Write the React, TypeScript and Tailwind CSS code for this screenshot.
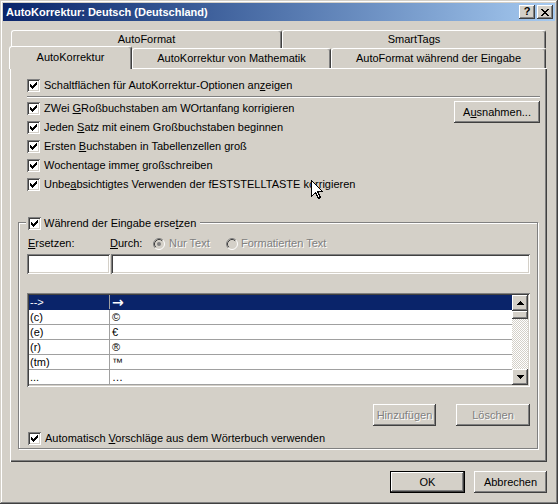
import React from "react";

const RAISED =
  "shadow-[inset_-1px_-1px_#404040,inset_1px_1px_#ffffff,inset_-2px_-2px_#808080,inset_2px_2px_#d4d0c8]";
const SUNKEN =
  "shadow-[inset_1px_1px_#808080,inset_-1px_-1px_#ffffff,inset_2px_2px_#404040,inset_-2px_-2px_#d4d0c8]";
const DISABLED = "text-[#808080] [text-shadow:1px_1px_0_#ffffff]";

function Check() {
  const tops = [2, 3, 4, 3, 2, 1, 0];
  return (
    <span className={`block h-[13px] w-[13px] shrink-0 bg-white ${SUNKEN}`}>
      <svg width="13" height="13" className="block" shapeRendering="crispEdges">
        {tops.map((t, i) => (
          <rect key={i} x={3 + i} y={3 + t} width={1} height={3} fill="#000" />
        ))}
      </svg>
    </span>
  );
}

function CheckRow({ children }: { children: React.ReactNode }) {
  return (
    <div className="flex h-[13px] items-center gap-[4px]">
      <Check />
      <span className="whitespace-nowrap">{children}</span>
    </div>
  );
}

function U({ children }: { children: React.ReactNode }) {
  return <span className="underline underline-offset-[1px]">{children}</span>;
}

function Radio({ checked }: { checked?: boolean }) {
  return (
    <svg width="12" height="12" className="block shrink-0">
      <path d="M2.11 9.89 A5.5 5.5 0 0 1 9.89 2.11" stroke="#808080" fill="none" />
      <path d="M9.89 2.11 A5.5 5.5 0 0 1 2.11 9.89" stroke="#ffffff" fill="none" />
      <path d="M2.82 9.18 A4.5 4.5 0 0 1 9.18 2.82" stroke="#404040" fill="none" />
      {checked && <circle cx="6" cy="6" r="2" fill="#808080" />}
    </svg>
  );
}

function Tab({
  w,
  h,
  children,
  extra = "",
}: {
  w: string;
  h: string;
  children: React.ReactNode;
  extra?: string;
}) {
  return (
    <div
      className={`flex items-center justify-center rounded-t-[3px] border-t border-l border-r border-white border-r-[#404040] bg-[#d4d0c8] shadow-[inset_-1px_0_#808080] ${w} ${h} ${extra}`}
    >
      {children}
    </div>
  );
}

function Arrow({ up }: { up?: boolean }) {
  return (
    <svg width="7" height="4" className="block" shapeRendering="crispEdges">
      {up ? (
        <>
          <rect x="3" y="0" width="1" height="1" />
          <rect x="2" y="1" width="3" height="1" />
          <rect x="1" y="2" width="5" height="1" />
          <rect x="0" y="3" width="7" height="1" />
        </>
      ) : (
        <>
          <rect x="0" y="0" width="7" height="1" />
          <rect x="1" y="1" width="5" height="1" />
          <rect x="2" y="2" width="3" height="1" />
          <rect x="3" y="3" width="1" height="1" />
        </>
      )}
    </svg>
  );
}

const rows: [string, string][] = [
  ["-->", "→"],
  ["(c)", "©"],
  ["(e)", "€"],
  ["(r)", "®"],
  ["(tm)", "™"],
  ["...", "…"],
];

export default function App() {
  return (
    <div
      className={`relative h-[504px] w-[558px] overflow-hidden bg-[#d4d0c8] p-[3px] text-[11px] leading-[13px] text-black [font-family:'Liberation_Sans',Arial,sans-serif] shadow-[inset_-1px_-1px_#404040,inset_1px_1px_#d4d0c8,inset_-2px_-2px_#808080,inset_2px_2px_#ffffff]`}
    >
      {/* Title bar */}
      <div className="flex h-[18px] items-center bg-linear-to-r from-[#0a246a] to-[#a6caf0] pl-[3px] pr-[2px]">
        <span className="flex-1 font-bold text-white">AutoKorrektur: Deutsch (Deutschland)</span>
        <div
          className={`flex h-[14px] w-[16px] items-center justify-center bg-[#d4d0c8] pb-[1px] font-bold ${RAISED}`}
        >
          ?
        </div>
        <div className={`ml-[2px] flex h-[14px] w-[16px] items-center justify-center bg-[#d4d0c8] ${RAISED}`}>
          <svg width="8" height="7" className="block" shapeRendering="crispEdges">
            <path d="M0 0h2v1h1v1h2V1h1V0h2v1H7v1H6v1H5v1h1v1h1v1h1v1H6V6H5V5H3v1H2v1H0V6h1V5h1V4h1V3H2V2H1V1H0z" />
          </svg>
        </div>
      </div>

      {/* Content */}
      <div className="pl-[7px] pt-[9px]">
        {/* back tab row */}
        <div className="flex h-[18px] pl-[1px]">
          <Tab w="w-[271px]" h="h-[18px]">AutoFormat</Tab>
          <Tab w="w-[264px]" h="h-[18px]">SmartTags</Tab>
        </div>
        {/* front tab row */}
        <div className="flex h-[20px] items-end">
          <Tab w="w-[123px]" h="h-[23px]" extra="relative z-10 -ml-[1px] -mb-[1px]">
            <span className="-mt-[1px]">AutoKorrektur</span>
          </Tab>
          <Tab w="w-[199px]" h="h-[20px]">AutoKorrektur von Mathematik</Tab>
          <Tab w="w-[215px]" h="h-[20px]">AutoFormat während der Eingabe</Tab>
        </div>

        {/* Panel */}
        <div className="flex h-[394px] w-[537px] flex-col bg-[#d4d0c8] shadow-[inset_1px_1px_#ffffff,inset_-1px_-1px_#404040,inset_-2px_-2px_#808080]">
          <div className="ml-[17px] mt-[11px]">
            <CheckRow>
              Schaltflächen für AutoKorrektur-Optionen an<U>z</U>eigen
            </CheckRow>
          </div>
          <div className="ml-[17px] mt-[4px] h-[2px] w-[513px] border-t border-b border-t-[#808080] border-b-white" />
          <div className="ml-[17px] mt-[3px] flex w-[513px] justify-between">
            <div className="flex flex-col gap-[6px] pt-[1px]">
              <CheckRow>
                ZWei <U>G</U>Roßbuchstaben am WOrtanfang korrigieren
              </CheckRow>
              <CheckRow>
                Jeden <U>S</U>atz mit einem Großbuchstaben beginnen
              </CheckRow>
              <CheckRow>
                Ersten <U>B</U>uchstaben in Tabellenzellen groß
              </CheckRow>
              <CheckRow>
                Wochentage imme<U>r</U> großschreiben
              </CheckRow>
              <CheckRow>
                Unbe<U>a</U>bsichtigtes Verwenden der fESTSTELLTASTE korrigieren
              </CheckRow>
            </div>
            <div className={`flex h-[22px] w-[86px] items-center justify-center ${RAISED}`}>
              A<U>u</U>snahmen...
            </div>
          </div>

          {/* Group box */}
          <div className="ml-[8px] mt-[31px] w-[520px] border border-[#808080] pb-[3px] shadow-[inset_1px_1px_#ffffff,1px_1px_#ffffff]">
            <div className="-mt-[6px] ml-[7px] flex h-[13px] w-fit items-center gap-[3px] bg-[#d4d0c8] pl-[2px] pr-[4px]">
              <Check />
              <span className="whitespace-nowrap">
                Während der Eingabe erse<U>t</U>zen
              </span>
            </div>
            <div className="pl-[8px]">
              {/* labels */}
              <div className="mt-[7px] flex h-[13px] items-center">
                <div className="w-[83px] pl-[1px]">
                  <U>E</U>rsetzen:
                </div>
                <div className="w-[43px]">
                  <U>D</U>urch:
                </div>
                <div className="flex w-[73px] items-center gap-[4px]">
                  <Radio checked />
                  <span className={DISABLED}>Nur Text</span>
                </div>
                <div className="flex items-center gap-[3px]">
                  <Radio />
                  <span className={DISABLED}>Formatierten Text</span>
                </div>
              </div>
              {/* inputs */}
              <div className="mt-[4px] flex gap-[1px]">
                <div className={`h-[20px] w-[83px] bg-white ${SUNKEN}`} />
                <div className={`h-[20px] w-[419px] bg-white ${SUNKEN}`} />
              </div>
              {/* list */}
              <div className={`mt-[19px] flex h-[94px] w-[503px] bg-white p-[2px] ${SUNKEN}`}>
                <div className="flex flex-1 flex-col">
                  {rows.map(([a, b], i) => (
                    <div
                      key={i}
                      className={
                        i === 0
                          ? "flex h-[15px] border-b border-[#0a246a] bg-[#0a246a] text-white"
                          : "flex h-[15px] border-b border-[#a0a0a0] bg-white"
                      }
                    >
                      <div className="flex w-[81px] items-center border-r border-[#a0a0a0] pl-[1px]">{a}</div>
                      <div className="flex flex-1 items-center pl-[2px]">
                        {i === 0 ? (
                          <span className="text-[14px] font-bold leading-[13px] [font-family:'DejaVu_Sans',sans-serif]">
                            {b}
                          </span>
                        ) : (
                          b
                        )}
                      </div>
                    </div>
                  ))}
                </div>
                <div className="flex w-[16px] flex-col">
                  <div className={`flex h-[16px] items-center justify-center bg-[#d4d0c8] ${RAISED}`}>
                    <Arrow up />
                  </div>
                  <div className={`h-[8px] bg-[#d4d0c8] ${RAISED}`} />
                  <div className="flex-1 bg-[image:repeating-conic-gradient(#d4d0c8_0_25%,#ffffff_0_50%)] bg-[length:2px_2px]" />
                  <div className={`flex h-[16px] items-center justify-center bg-[#d4d0c8] ${RAISED}`}>
                    <Arrow />
                  </div>
                </div>
              </div>
              {/* add / delete buttons */}
              <div className="mt-[17px] flex w-[503px] justify-end gap-[20px]">
                <div className={`flex h-[22px] w-[63px] items-center justify-center ${RAISED}`}>
                  <span className={DISABLED}>Hinzufügen</span>
                </div>
                <div className={`flex h-[22px] w-[74px] items-center justify-center ${RAISED}`}>
                  <span className={DISABLED}>Löschen</span>
                </div>
              </div>
              <div className="ml-[1px] mt-[6px]">
                <CheckRow>
                  Automatisch <U>V</U>orschläge aus dem Wörterbuch verwenden
                </CheckRow>
              </div>
            </div>
          </div>
        </div>

        {/* OK / Cancel */}
        <div className="mt-[9px] flex w-[537px] justify-end gap-[9px]">
          <div className="h-[22px] w-[75px] border border-black">
            <div className={`flex h-full w-full items-center justify-center ${RAISED}`}>OK</div>
          </div>
          <div className={`flex h-[22px] w-[73px] items-center justify-center ${RAISED}`}>Abbrechen</div>
        </div>
      </div>

      {/* mouse cursor */}
      <svg
        width="13"
        height="20"
        className="pointer-events-none absolute left-[311px] top-[180px]"
        shapeRendering="crispEdges"
      >
        <path
          d="M0.5 0.5 V16.5 L4.5 12.5 L7.5 18.5 L9.5 17.5 L6.5 11.5 H11.5 Z"
          fill="#ffffff"
          stroke="#000000"
          strokeWidth="1"
        />
      </svg>
    </div>
  );
}
